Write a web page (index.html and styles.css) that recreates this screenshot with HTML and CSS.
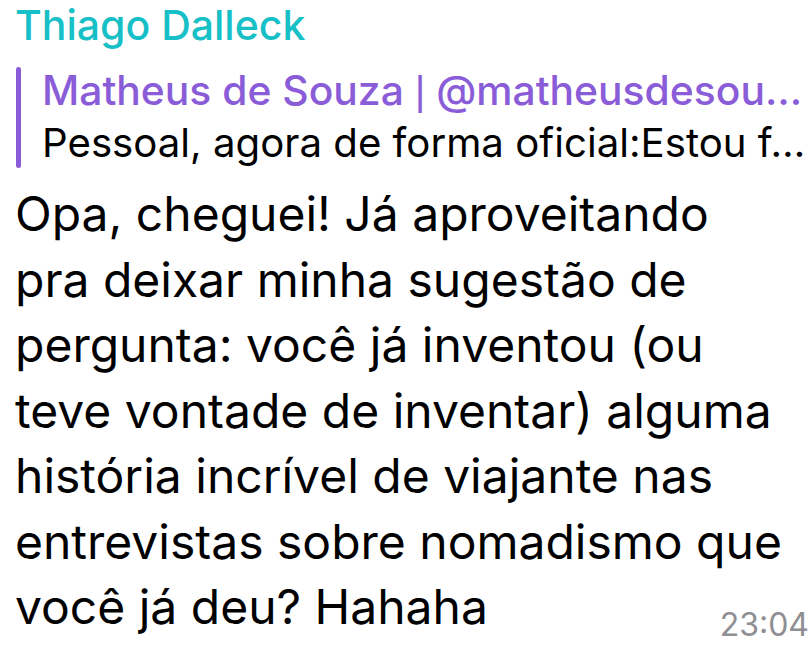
FILE: index.html
```html
<!DOCTYPE html>
<html lang="pt">
<head>
<meta charset="utf-8">
<link rel="stylesheet" href="styles.css">
</head>
<body>
<div class="message">
  <div class="sender">Thiago Dalleck</div>
  <div class="reply">
    <div class="reply-bar"></div>
    <div class="reply-content">
      <div class="reply-title">Matheus de Souza <span class="pipe">|</span> @matheusdesou…</div>
      <div class="reply-text">Pessoal, agora de forma oficial:Estou f…</div>
    </div>
  </div>
  <div class="body">Opa, cheguei! Já aproveitando<br>pra deixar minha sugestão de<br>pergunta: você já inventou (ou<br>teve vontade de inventar) alguma<br>história incrível de viajante nas<br>entrevistas sobre nomadismo que<br>você já deu? Hahaha<span class="time">23:04</span></div>
</div>
</body>
</html>
```
FILE: styles.css
```css
html, body {
  margin: 0;
  padding: 0;
  background: #ffffff;
  width: 810px;
  height: 648px;
  overflow: hidden;
}
.message {
  font-family: Inter, "Liberation Sans", sans-serif;
  padding: 0 0 0 15px;
  color: #000;
}
.sender {
  color: #17c0c6;
  font-size: 41px;
  font-weight: 500;
  line-height: 52px;
  margin-top: -1px;
}
.reply {
  display: flex;
  gap: 21px;
  margin-top: 13px;
  margin-left: 1px;
}
.reply-bar {
  width: 5px;
  height: 101px;
  margin-top: 3px;
  border-radius: 3px;
  background: #8a5cd8;
  flex: none;
}
.reply-content {
  min-width: 0;
  flex: 1;
}
.reply-title, .reply-text {
  white-space: nowrap;
  line-height: 52px;
}
.reply-title {
  color: #8a5cd8;
  font-weight: 500;
  font-size: 40.8px;
}
.pipe {
  font-weight: 400;
  font-family: "Liberation Sans", sans-serif;
}
.reply-text {
  color: #000;
  font-size: 40.2px;
}
.body {
  font-size: 48px;
  line-height: 65.5px;
  margin-top: 12px;
  position: relative;
}
.time {
  position: absolute;
  right: 1px;
  bottom: -5px;
  font-size: 32px;
  color: #8e8e93;
  line-height: 40px;
}
```
